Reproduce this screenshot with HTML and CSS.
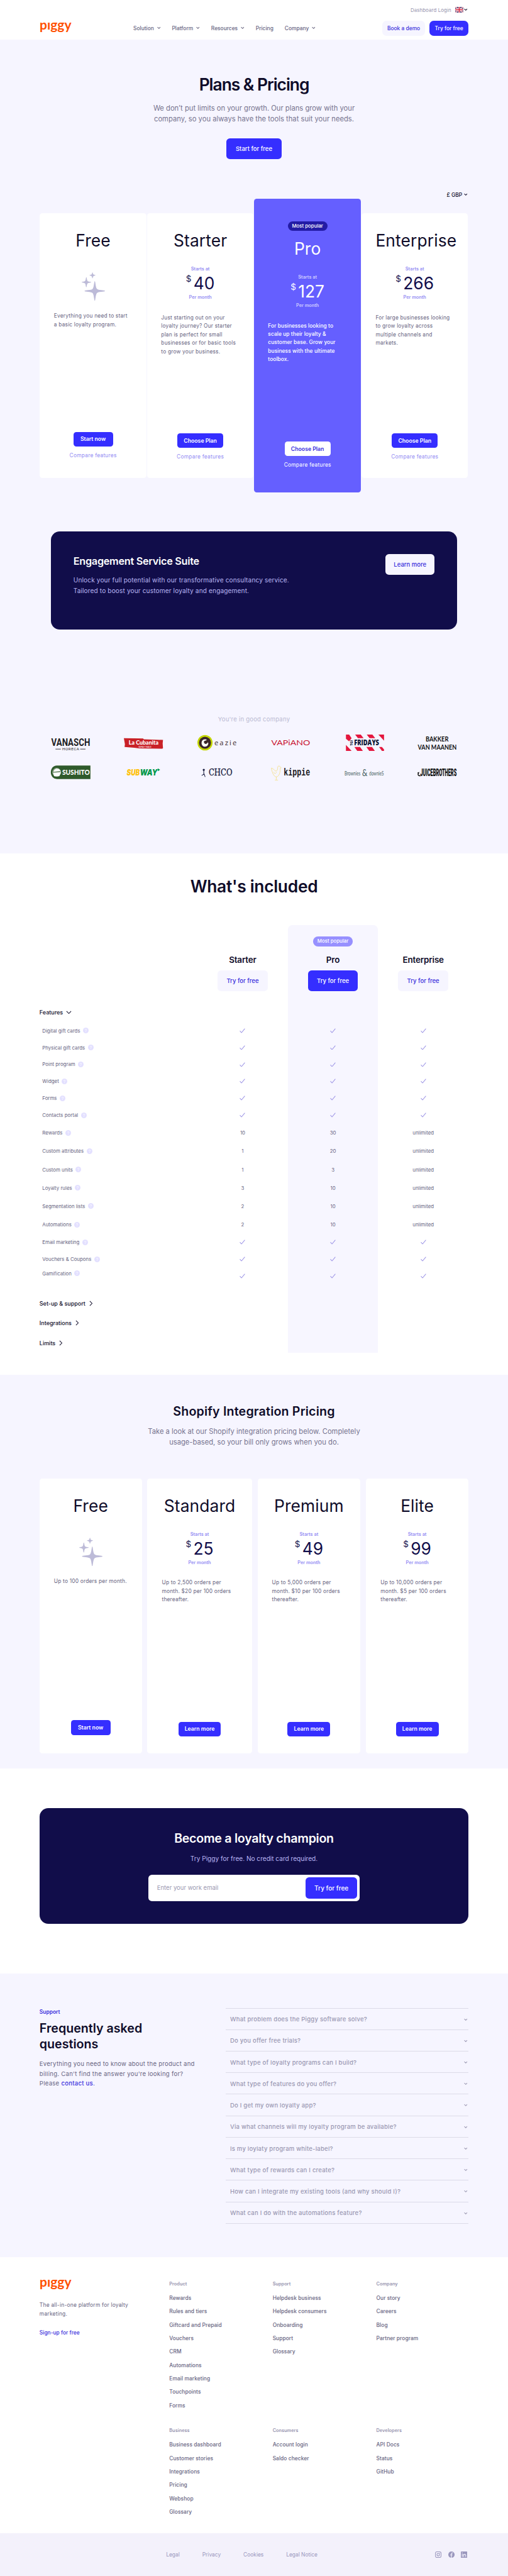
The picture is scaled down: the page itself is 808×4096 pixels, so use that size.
FILE: index.html
```html
<!DOCTYPE html>
<html lang="en">
<head>
    <meta charset="UTF-8">
    <meta name="viewport" content="width=device-width, initial-scale=1.0">
    <title>Piggy - Plans &amp; Pricing</title>
    <link rel="stylesheet" href="styles.css">
</head>
<body>
<div class="page">

    <!-- Shared icons -->
    <svg class="sprite">
        <symbol id="chev" viewBox="0 0 10 8"><path d="M1 2l4 4 4-4" fill="none" stroke="currentColor" stroke-width="1.8"/></symbol>
        <symbol id="chev-big" viewBox="0 0 16 10"><path d="M1.500 1.500L8 8l6.500-6.500" fill="none" stroke="currentColor" stroke-width="1.800"/></symbol>
        <symbol id="chev-right" viewBox="0 0 10 16"><path d="M1.500 1.500L8 8l-6.500 6.500" fill="none" stroke="currentColor" stroke-width="1.800"/></symbol>
        <symbol id="check" viewBox="0 0 16 14"><path d="M1 7.500l4.500 5L15 1" fill="none" stroke="currentColor" stroke-width="1.800"/></symbol>
        <symbol id="help" viewBox="0 0 16 16"><circle cx="8" cy="8" r="8" fill="#e3e0ff"/><path d="M5.800 6.400c0-3 4.600-2.800 4.400 0-.1 1.300-2.200 1.400-2.200 3.100M8 11v1.600" fill="none" stroke="#fff" stroke-width="1.500"/></symbol>
        <symbol id="stars" viewBox="0 0 66 81"><path d="M37 25c2 0 2 17 6 22s23 3 23 6-19 1-23 6-4 22-6 22-2-17-6-22-23-3-23-6 19-1 23-6 4-22 6-22zM13 14c1.500 0 1.500 8 3.500 10.500S27 26.500 27 28s-8 1-10.500 3.500S14.500 42 13 42s-1.500-8-3.500-10.500S0 29.500 0 28s7-1 9.500-3.500S11.500 14 13 14zM30.500 0c1 0 1 4.500 2.500 6s6 1.500 6 2.500-4.500 1-6 2.500-1.500 6-2.500 6-1-4.500-2.500-6-6-1.500-6-2.500 4.500-1 6-2.500 1.500-6 2.500-6z" fill="#bdbbd8"/></symbol>
    </svg>

    <header class="header">
        <div class="topbar">
            <a class="login">Dashboard Login</a>
            <svg class="flag" viewBox="0 0 23 16"><rect width="23" height="16" fill="#2b2b6b"/><path d="M0 0l23 16M23 0L0 16" stroke="#fff" stroke-width="3.500"/><path d="M0 0l23 16M23 0L0 16" stroke="#d8243c" stroke-width="1.200"/><path d="M11.500 0v16M0 8h23" stroke="#fff" stroke-width="5"/><path d="M11.500 0v16M0 8h23" stroke="#d8243c" stroke-width="3"/></svg>
            <svg class="chev dark"><use href="#chev"/></svg>
        </div>
        <div class="navbar">
            <svg class="brand" viewBox="0 0 92 30"><text x="0" y="20" textLength="90" lengthAdjust="spacingAndGlyphs">pıggy</text></svg>
            <nav class="nav">
                <a>Solution <svg class="chev"><use href="#chev"/></svg></a>
                <a>Platform <svg class="chev"><use href="#chev"/></svg></a>
                <a>Resources <svg class="chev"><use href="#chev"/></svg></a>
                <a>Pricing</a>
                <a>Company <svg class="chev"><use href="#chev"/></svg></a>
            </nav>
            <div class="nav-buttons">
                <a class="btn btn-soft btn-nav btn-demo">Book a demo</a>
                <a class="btn btn-blue btn-nav btn-try">Try for free</a>
            </div>
        </div>
    </header>

    <section class="pricing">
        <h1>Plans &amp; Pricing</h1>
        <p class="lead">We don’t put limits on your growth. Our plans grow with your<br>company, so you always have the tools that suit your needs.</p>
        <a class="btn btn-blue btn-start">Start for free</a>
        <div class="currency">£ GBP <svg class="chev dark"><use href="#chev"/></svg></div>

        <div class="plans">
            <div class="plan plan-free">
                <h3>Free</h3>
                <svg class="stars"><use href="#stars"/></svg>
                <p>Everything you need to start<br>a basic loyalty program.</p>
                <a class="btn btn-blue btn-plan btn-now">Start now</a>
                <a class="compare">Compare features</a>
            </div>
            <div class="plan">
                <h3>Starter</h3>
                <span class="small">Starts at</span>
                <div class="price"><sup>$</sup>40</div>
                <span class="small">Per month</span>
                <p>Just starting out on your<br>loyalty journey? Our starter<br>plan is perfect for small<br>businesses or for basic tools<br>to grow your business.</p>
                <a class="btn btn-blue btn-plan">Choose Plan</a>
                <a class="compare">Compare features</a>
            </div>
            <div class="plan plan-pro">
                <span class="pill">Most popular</span>
                <h3>Pro</h3>
                <span class="small">Starts at</span>
                <div class="price"><sup>$</sup>127</div>
                <span class="small">Per month</span>
                <p>For businesses looking to<br>scale up their loyalty &amp;<br>customer base. Grow your<br>business with the ultimate<br>toolbox.</p>
                <a class="btn btn-white btn-plan">Choose Plan</a>
                <a class="compare">Compare features</a>
            </div>
            <div class="plan">
                <h3>Enterprise</h3>
                <span class="small">Starts at</span>
                <div class="price"><sup>$</sup>266</div>
                <span class="small">Per month</span>
                <p>For large businesses looking<br>to grow loyalty across<br>multiple channels and<br>markets.</p>
                <a class="btn btn-blue btn-plan">Choose Plan</a>
                <a class="compare">Compare features</a>
            </div>
        </div>

        <div class="suite">
            <div>
                <h2>Engagement Service Suite</h2>
                <p>Unlock your full potential with our transformative consultancy service.<br>Tailored to boost your customer loyalty and engagement.</p>
            </div>
            <a class="btn btn-light">Learn more</a>
        </div>

        <p class="company">You're in good company</p>
        <div class="logos">
            <svg viewBox="0 0 112 50"><g fill="#1d1d22" font-family="Roboto"><text x="1" y="33" font-size="28" font-weight="700" textLength="110" lengthAdjust="spacingAndGlyphs">VANASCH</text><text x="32" y="47" font-size="11" textLength="48" lengthAdjust="spacing">HORECA</text></g><path d="M13 43h15M83 43h15" stroke="#1d1d22" stroke-width="1.500"/></svg>
            <svg viewBox="0 0 112 50"><path d="M0 12l55 1 1 2 55 2-1 10 1 13-2 2-65-1-14-2-28-2 1-8z" fill="#c92127"/><g fill="#fff" font-family="Lato"><text x="14" y="31" font-size="17" font-weight="900" textLength="84" lengthAdjust="spacingAndGlyphs">La Cubanita</text><text x="41" y="39" font-size="6" textLength="37" lengthAdjust="spacingAndGlyphs">TAPAS Y BAILE</text></g></svg>
            <svg viewBox="0 0 112 50"><ellipse cx="21.500" cy="25" rx="21.500" ry="22" fill="#c3d600"/><circle cx="21.500" cy="25" r="17" fill="#3a2629"/><path d="M31 28c-2 7-9 10-14 7-7-4-7-15 0-19 4-2 9-1 10 2-5-1-9 5-4 8 3 2 6 0 7-3" fill="#fff"/><path d="M21 20c-3 5 2 9 6 5" fill="none" stroke="#3a2629" stroke-width="3"/><text x="48" y="32" font-family="Open Sans" font-size="20" fill="#3a2629" textLength="63" lengthAdjust="spacing">eazie</text></svg>
            <svg viewBox="0 0 112 50"><text x="1" y="32" fill="#c8102e" font-family="Lato" font-size="22" textLength="110" lengthAdjust="spacingAndGlyphs">VAPiANO</text></svg>
            <svg viewBox="0 0 112 50"><path d="M4 2h9l7 10-7 9-9-7zM30 2h16l8 10H38zM63 2h16l8 10H71zM96 2h16v17zM4 48h16L4 31zM28 37h16l8 11H36zM62 37h16l8 11H70zM98 37h8l6 7v4h-6z" fill="#e4173e"/><g font-family="Open Sans" fill="#0b1533" font-weight="800"><text x="27" y="32" font-size="21" textLength="71" lengthAdjust="spacingAndGlyphs">FRIDAYS</text><text transform="translate(24 33) rotate(-90)" font-size="9">TGI</text></g></svg>
            <svg viewBox="0 0 112 50"><g font-family="Lato" font-size="21" font-weight="700" fill="#111"><text x="23" y="22" textLength="65" lengthAdjust="spacingAndGlyphs">BAKKER</text><text x="1" y="45" textLength="110" lengthAdjust="spacingAndGlyphs">VAN MAANEN</text></g></svg>
            <svg viewBox="0 0 112 50"><path d="M112 6v38H17C-6 44-6 6 17 6z" fill="#2f5a2b"/><circle cx="16.500" cy="25" r="11.500" fill="none" stroke="#fff" stroke-width="1.200"/><path d="M7 24c1-11 17-13 20-2zM6 26l22-2-4 12H9z" fill="#fff"/><text x="32" y="32" font-family="Lato" font-size="20" font-weight="900" fill="#fff" textLength="78" lengthAdjust="spacingAndGlyphs">SUSHITO</text></svg>
            <svg viewBox="0 0 112 50"><g font-family="Inter" font-size="24" font-weight="900" font-style="italic"><text x="8" y="34" fill="#ffc20e" textLength="37" lengthAdjust="spacingAndGlyphs">SUB</text><text x="46" y="34" fill="#00984a" textLength="49" lengthAdjust="spacingAndGlyphs">WAY</text></g><path d="M96 14l7 4-7 4z" fill="#00984a"/></svg>
            <svg viewBox="0 0 112 50"><circle cx="18" cy="18" r="3" fill="#15193c"/><path d="M18 18v14M12 34l7-4 3 8" fill="none" stroke="#15193c" stroke-width="1.800"/><text x="32" y="34" font-family="DejaVu Serif" font-size="25" fill="#15193c" stroke="#15193c" stroke-width=".6" textLength="67" lengthAdjust="spacingAndGlyphs">CHCO</text></svg>
            <svg viewBox="0 0 112 50"><path d="M1 13c4 0 9 6 11 8 5 1 7-2 7-10 0-5 6-5 6-2l4 3-3 2c1 8-2 22-10 24-7 0-12-9-15-25zM15 38v8M11 47h9M8 24c0 5 6 6 8 0" fill="none" stroke="#f4df86" stroke-width="1.500"/><text x="36" y="34" font-family="Liberation Mono" font-size="30" font-weight="700" fill="#17171a" textLength="75" lengthAdjust="spacingAndGlyphs">kippie</text></svg>
            <svg viewBox="0 0 112 50"><g font-family="Lato" fill="#3f5a5c"><text x="0" y="34" font-size="17" textLength="45" lengthAdjust="spacingAndGlyphs">Brownies</text><text x="50" y="35" font-size="26" textLength="15" lengthAdjust="spacingAndGlyphs">&amp;</text><text x="70" y="34" font-size="17" textLength="41" lengthAdjust="spacingAndGlyphs">downieS</text></g></svg>
            <svg viewBox="0 0 112 50"><path d="M0 26l5-2-1 5c-3 3 1 5 4 4l1 3c-6 1-10-3-8-7z" fill="#111"/><text x="8" y="35" font-family="Roboto" font-size="30" font-weight="900" fill="#111" textLength="103" lengthAdjust="spacingAndGlyphs">JUICEBROTHERS</text></svg>
        </div>
    </section>

    <section class="included">
        <h2>What's included</h2>
        <div class="row row-head">
            <div></div>
            <div class="cell"><h4>Starter</h4><a class="btn btn-soft btn-table">Try for free</a></div>
            <div class="cell"><span class="pill">Most popular</span><h4>Pro</h4><a class="btn btn-blue btn-table">Try for free</a></div>
            <div class="cell"><h4>Enterprise</h4><a class="btn btn-soft btn-table">Try for free</a></div>
        </div>
        <div class="row row-group"><div>Features <svg class="chev-big"><use href="#chev-big"/></svg></div><div></div><div></div><div></div></div>
        <div class="row"><div>Digital gift cards <svg class="help"><use href="#help"/></svg></div><div><svg class="check"><use href="#check"/></svg></div><div><svg class="check"><use href="#check"/></svg></div><div><svg class="check"><use href="#check"/></svg></div></div>
        <div class="row"><div>Physical gift cards <svg class="help"><use href="#help"/></svg></div><div><svg class="check"><use href="#check"/></svg></div><div><svg class="check"><use href="#check"/></svg></div><div><svg class="check"><use href="#check"/></svg></div></div>
        <div class="row"><div>Point program <svg class="help"><use href="#help"/></svg></div><div><svg class="check"><use href="#check"/></svg></div><div><svg class="check"><use href="#check"/></svg></div><div><svg class="check"><use href="#check"/></svg></div></div>
        <div class="row"><div>Widget <svg class="help"><use href="#help"/></svg></div><div><svg class="check"><use href="#check"/></svg></div><div><svg class="check"><use href="#check"/></svg></div><div><svg class="check"><use href="#check"/></svg></div></div>
        <div class="row"><div>Forms <svg class="help"><use href="#help"/></svg></div><div><svg class="check"><use href="#check"/></svg></div><div><svg class="check"><use href="#check"/></svg></div><div><svg class="check"><use href="#check"/></svg></div></div>
        <div class="row"><div>Contacts portal <svg class="help"><use href="#help"/></svg></div><div><svg class="check"><use href="#check"/></svg></div><div><svg class="check"><use href="#check"/></svg></div><div><svg class="check"><use href="#check"/></svg></div></div>
        <div class="row row-value"><div>Rewards <svg class="help"><use href="#help"/></svg></div><div>10</div><div>30</div><div>unlimited</div></div>
        <div class="row row-value"><div>Custom attributes <svg class="help"><use href="#help"/></svg></div><div>1</div><div>20</div><div>unlimited</div></div>
        <div class="row row-value"><div>Custom units <svg class="help"><use href="#help"/></svg></div><div>1</div><div>3</div><div>unlimited</div></div>
        <div class="row row-value"><div>Loyalty rules <svg class="help"><use href="#help"/></svg></div><div>3</div><div>10</div><div>unlimited</div></div>
        <div class="row row-value"><div>Segmentation lists <svg class="help"><use href="#help"/></svg></div><div>2</div><div>10</div><div>unlimited</div></div>
        <div class="row row-value"><div>Automations <svg class="help"><use href="#help"/></svg></div><div>2</div><div>10</div><div>unlimited</div></div>
        <div class="row"><div>Email marketing <svg class="help"><use href="#help"/></svg></div><div><svg class="check"><use href="#check"/></svg></div><div><svg class="check"><use href="#check"/></svg></div><div><svg class="check"><use href="#check"/></svg></div></div>
        <div class="row"><div>Vouchers &amp; Coupons <svg class="help"><use href="#help"/></svg></div><div><svg class="check"><use href="#check"/></svg></div><div><svg class="check"><use href="#check"/></svg></div><div><svg class="check"><use href="#check"/></svg></div></div>
        <div class="row row-last"><div>Gamification <svg class="help"><use href="#help"/></svg></div><div><svg class="check"><use href="#check"/></svg></div><div><svg class="check"><use href="#check"/></svg></div><div><svg class="check"><use href="#check"/></svg></div></div>
        <div class="row row-gap"><div></div><div></div><div></div><div></div></div>
        <div class="row row-group"><div>Set-up &amp; support <svg class="chev-right"><use href="#chev-right"/></svg></div><div></div><div></div><div></div></div>
        <div class="row row-group"><div>Integrations <svg class="chev-right"><use href="#chev-right"/></svg></div><div></div><div></div><div></div></div>
        <div class="row row-group"><div>Limits <svg class="chev-right"><use href="#chev-right"/></svg></div><div></div><div></div><div></div></div>
    </section>

    <section class="shopify">
        <h2>Shopify Integration Pricing</h2>
        <p class="lead">Take a look at our Shopify integration pricing below. Completely<br>usage-based, so your bill only grows when you do.</p>
        <div class="plans">
            <div class="plan plan-free">
                <h3>Free</h3>
                <svg class="stars"><use href="#stars"/></svg>
                <p>Up to 100 orders per month.</p>
                <a class="btn btn-blue btn-plan btn-now">Start now</a>
            </div>
            <div class="plan">
                <h3>Standard</h3>
                <span class="small">Starts at</span>
                <div class="price"><sup>$</sup>25</div>
                <span class="small">Per month</span>
                <p>Up to 2,500 orders per<br>month. $20 per 100 orders<br>thereafter.</p>
                <a class="btn btn-blue btn-plan btn-more">Learn more</a>
            </div>
            <div class="plan">
                <h3>Premium</h3>
                <span class="small">Starts at</span>
                <div class="price"><sup>$</sup>49</div>
                <span class="small">Per month</span>
                <p>Up to 5,000 orders per<br>month. $10 per 100 orders<br>thereafter.</p>
                <a class="btn btn-blue btn-plan btn-more">Learn more</a>
            </div>
            <div class="plan">
                <h3>Elite</h3>
                <span class="small">Starts at</span>
                <div class="price"><sup>$</sup>99</div>
                <span class="small">Per month</span>
                <p>Up to 10,000 orders per<br>month. $5 per 100 orders<br>thereafter.</p>
                <a class="btn btn-blue btn-plan btn-more">Learn more</a>
            </div>
        </div>
    </section>

    <section class="cta">
        <div class="cta-box">
            <h2>Become a loyalty champion</h2>
            <p>Try Piggy for free. No credit card required.</p>
            <div class="cta-form">
                <span>Enter your work email</span>
                <a class="btn btn-blue">Try for free</a>
            </div>
        </div>
    </section>

    <section class="faq">
        <div class="faq-intro">
            <span class="tag">Support</span>
            <h2>Frequently asked<br>questions</h2>
            <p>Everything you need to know about the product and<br>billing. Can't find the answer you're looking for?<br>Please <a>contact us.</a></p>
        </div>
        <div class="faq-list">
            <div>What problem does the Piggy software solve? <svg class="chev"><use href="#chev"/></svg></div>
            <div>Do you offer free trials? <svg class="chev"><use href="#chev"/></svg></div>
            <div>What type of loyalty programs can I build? <svg class="chev"><use href="#chev"/></svg></div>
            <div>What type of features do you offer? <svg class="chev"><use href="#chev"/></svg></div>
            <div>Do I get my own loyalty app? <svg class="chev"><use href="#chev"/></svg></div>
            <div>Via what channels will my loyalty program be available? <svg class="chev"><use href="#chev"/></svg></div>
            <div>Is my loylaty program white-label? <svg class="chev"><use href="#chev"/></svg></div>
            <div>What type of rewards can I create? <svg class="chev"><use href="#chev"/></svg></div>
            <div>How can I integrate my existing tools (and why should I)? <svg class="chev"><use href="#chev"/></svg></div>
            <div>What can I do with the automations feature? <svg class="chev"><use href="#chev"/></svg></div>
        </div>
    </section>

    <footer>
        <div class="footer">
            <div class="footer-intro">
                <svg class="brand" viewBox="0 0 92 30"><text x="0" y="20" textLength="90" lengthAdjust="spacingAndGlyphs">pıggy</text></svg>
                <p>The all-in-one platform for loyalty<br>marketing.</p>
                <a>Sign-up for free</a>
            </div>
            <div class="footer-links">
                <ul>
                    <li class="title">Product</li>
                    <li>Rewards</li>
                    <li>Rules and tiers</li>
                    <li>Giftcard and Prepaid</li>
                    <li>Vouchers</li>
                    <li>CRM</li>
                    <li>Automations</li>
                    <li>Email marketing</li>
                    <li>Touchpoints</li>
                    <li>Forms</li>
                </ul>
                <ul>
                    <li class="title">Support</li>
                    <li>Helpdesk business</li>
                    <li>Helpdesk consumers</li>
                    <li>Onboarding</li>
                    <li>Support</li>
                    <li>Glossary</li>
                </ul>
                <ul>
                    <li class="title">Company</li>
                    <li>Our story</li>
                    <li>Careers</li>
                    <li>Blog</li>
                    <li>Partner program</li>
                </ul>
                <ul>
                    <li class="title">Business</li>
                    <li>Business dashboard</li>
                    <li>Customer stories</li>
                    <li>Integrations</li>
                    <li>Pricing</li>
                    <li>Webshop</li>
                    <li>Glossary</li>
                </ul>
                <ul>
                    <li class="title">Consumers</li>
                    <li>Account login</li>
                    <li>Saldo checker</li>
                </ul>
                <ul>
                    <li class="title">Developers</li>
                    <li>API Docs</li>
                    <li>Status</li>
                    <li>GitHub</li>
                </ul>
            </div>
        </div>
        <div class="legal">
            <div class="legal-links"><a>Legal</a><a>Privacy</a><a>Cookies</a><a>Legal Notice</a></div>
            <div class="social">
                <svg viewBox="0 0 18 18"><rect x="1" y="1" width="16" height="16" rx="4" fill="none" stroke="#9a97bd" stroke-width="1.800"/><circle cx="9" cy="9" r="3.700" fill="none" stroke="#9a97bd" stroke-width="1.800"/><circle cx="13.500" cy="4.500" r="1.100" fill="#9a97bd"/></svg>
                <svg viewBox="0 0 18 18"><circle cx="9" cy="9" r="9" fill="#9a97bd"/><path d="M8.800 18V7c0-2 1.200-3 4-2.600M5.500 9.800h6.500" fill="none" stroke="#f3f1fb" stroke-width="2.200"/></svg>
                <svg viewBox="0 0 18 18"><rect width="18" height="18" rx="1.500" fill="#9a97bd"/><path d="M4 7v8M4 3v2.500M8 15V7M8 15v-4c0-4 5.800-4 5.800 0v4" fill="none" stroke="#f3f1fb" stroke-width="2.200"/></svg>
            </div>
        </div>
    </footer>

</div>
</body>
</html>
```
FILE: styles.css
```css
* {
    box-sizing: border-box;
    margin: 0;
    padding: 0;
}

body {
    font-family: Inter, "Open Sans", sans-serif;
    background: #f3f1fb;
}

.page {
    zoom: 0.561;
    font-size: 15px;
    color: #67647f;
    background: #fff;
    white-space: nowrap;
    overflow: hidden;
}

h1, h2, h3, h4 {
    color: #0f0c29;
    font-weight: 600;
}

svg {
    flex-shrink: 0;
}

ul {
    list-style: none;
}

.sprite {
    display: none;
}

.chev {
    width: 10px;
    height: 8px;
}

.dark {
    color: #0f0c29;
}

/* Buttons */
.btn {
    display: flex;
    align-items: center;
    justify-content: center;
    border-radius: 10px;
    font-weight: 500;
}

.btn-blue {
    background: #352eff;
    color: #fff;
}

.btn-soft {
    background: #f6f5ff;
    color: #3a2fdc;
}

.btn-white {
    background: #fff;
    color: #3a2fdc;
}

.btn-light {
    background: #f6f5ff;
    color: #3a2fdc;
    width: 139px;
    height: 58px;
    font-size: 17px;
}

.btn-nav {
    height: 42px;
    border-radius: 12px;
    font-size: 15px;
}

.btn-demo {
    width: 121px;
}

.btn-try {
    width: 110px;
}

.btn-start {
    width: 158px;
    height: 58px;
    margin: 40px auto 0;
    font-size: 17px;
}

.btn-plan {
    width: 130px;
    height: 42px;
    border-radius: 8px;
    font-size: 15.5px;
    font-weight: 600;
    margin: auto auto 0;
}

.btn-now {
    width: 112px;
}

.btn-more {
    width: 121px;
}

.btn-table {
    width: 142px;
    height: 58px;
    font-size: 17px;
    margin-top: 16px;
}

.pill {
    display: block;
    width: 112px;
    height: 28px;
    border-radius: 14px;
    line-height: 28px;
    font-size: 14px;
    font-weight: 500;
    text-align: center;
    color: #fff;
    background: #231ba5;
}

/* Header */
.header {
    height: 112px;
    padding: 0 112px;
}

.topbar {
    display: flex;
    justify-content: flex-end;
    align-items: center;
    height: 56px;
    padding-right: 2px;
    font-size: 14px;
    letter-spacing: 0.2px;
    color: #9693ae;
}

.flag {
    width: 23px;
    height: 16px;
    margin: 0 2px 0 12px;
}

.navbar {
    display: flex;
    align-items: center;
    height: 48px;
}

.brand {
    display: block;
    width: 92px;
    height: 30px;
    font-family: Lato, sans-serif;
    font-size: 37px;
    font-weight: 700;
    fill: #ff5000;
    overflow: visible;
}

.nav {
    display: flex;
    width: 706px;
    margin-left: 174px;
    font-size: 15px;
    font-weight: 500;
    gap: 32px;
}

.nav .chev {
    margin-left: 5px;
    vertical-align: 2px;
}

.nav-buttons {
    display: flex;
    gap: 13px;
}

/* Plans & pricing */
.pricing {
    height: 2307px;
    padding: 98px 112px 0;
    background: #f6f5ff;
}

.pricing h1 {
    font-size: 47px;
    line-height: 58px;
    letter-spacing: -1.8px;
    text-align: center;
}

.lead {
    font-size: 20px;
    line-height: 30px;
    text-align: center;
    color: #77748f;
    margin-top: 25px;
}

.currency {
    display: flex;
    align-items: center;
    justify-content: flex-end;
    gap: 6px;
    height: 22px;
    margin-top: 90px;
    padding-right: 2px;
    font-weight: 500;
    color: #0f0c29;
}

.plans {
    display: grid;
    grid-template-columns: repeat(4, 304px);
    height: 832px;
}

.plan {
    display: flex;
    flex-direction: column;
    align-items: center;
    margin: 41px 1px;
    padding: 49px 40px;
    background: #fff;
    border-radius: 8px;
}

.plan h3 {
    width: 100%;
    font-size: 47px;
    font-weight: 400;
    line-height: 60px;
    letter-spacing: 0.2px;
    text-align: center;
    margin-bottom: 41px;
}

.plan .small {
    font-size: 13px;
    line-height: 18px;
    font-weight: 600;
    color: #948df3;
}

.price {
    display: flex;
    gap: 6px;
    margin: 7px 0;
    font-size: 47px;
    line-height: 48px;
    color: #110d4a;
}

.price sup {
    font-size: 24px;
    line-height: 22px;
}

.plan p {
    align-self: stretch;
    margin-top: 37px;
    font-size: 15px;
    line-height: 24px;
    letter-spacing: 0.3px;
}

.compare {
    margin-top: 15px;
    line-height: 20px;
    letter-spacing: 0.4px;
    color: #948df3;
}

.plan-free {
    padding-bottom: 53px;
}

.stars {
    width: 66px;
    height: 81px;
    margin-top: 18px;
}

.plan-free p {
    margin-top: 32px;
}

.plan-pro {
    margin: 0;
    padding: 64px 40px 67px;
    background: #655fff;
    color: #fff;
}

.plan-pro h3 {
    margin-top: 21px;
}

.plan-pro h3, .plan-pro .price, .plan-pro .compare {
    color: #fff;
}

.plan-pro .small {
    color: #cfccff;
}

.plan-pro p {
    font-weight: 500;
    letter-spacing: 0.1px;
}

/* Service suite banner */
.suite {
    display: flex;
    justify-content: space-between;
    width: 1152px;
    height: 278px;
    margin: 112px auto 0;
    padding: 64px;
    background: #110d4a;
    border-radius: 25px;
}

.suite h2 {
    color: #fff;
    font-size: 29px;
    line-height: 36px;
    letter-spacing: -0.5px;
    margin-top: 2px;
}

.suite p {
    margin-top: 20px;
    font-size: 18px;
    line-height: 30px;
    letter-spacing: 0.25px;
    color: #bab6f5;
}

.company {
    margin-top: 241px;
    font-size: 17px;
    line-height: 24px;
    letter-spacing: 0.4px;
    text-align: center;
    color: #babad2;
}

.logos {
    display: grid;
    grid-template-columns: repeat(6, 112px);
    justify-content: space-between;
    gap: 35px 0;
    margin-top: 30px;
    padding: 0 32px;
}

.logos svg {
    width: 112px;
    height: 50px;
    overflow: visible;
}

/* Feature table */
.included {
    height: 1478px;
    padding: 64px 112px 0;
}

.included h2 {
    font-size: 47px;
    line-height: 60px;
    letter-spacing: -0.5px;
    text-align: center;
    margin-bottom: 80px;
}

.row {
    display: grid;
    grid-template-columns: 448px 256px 256px 256px;
    height: 48px;
    font-size: 14px;
}

.row > div {
    display: flex;
    align-items: center;
    justify-content: center;
}

.row > div:first-child {
    justify-content: flex-start;
    padding-left: 8px;
    gap: 8px;
}

.row > div:nth-child(3) {
    background: #f7f6ff;
}

.row-head {
    height: 218px;
}

.row > .cell {
    flex-direction: column;
    justify-content: flex-end;
    padding-bottom: 32px;
    border-radius: 12px 12px 0 0;
}

.cell h4 {
    font-size: 24px;
    line-height: 30px;
    letter-spacing: -0.3px;
}

.cell .pill {
    background: #9790ff;
    margin-bottom: 22px;
}

.row-value {
    height: 52px;
}

.row-last > div:first-child {
    padding-bottom: 15px;
}

.row-gap {
    height: 25px;
}

.row-group {
    height: 56px;
    font-size: 16px;
    font-weight: 500;
    color: #0f0c29;
}

.row-group > div:first-child {
    padding-left: 0;
}

.chev-big {
    width: 16px;
    height: 10px;
}

.chev-right {
    width: 10px;
    height: 16px;
    margin-left: 3px;
}

.help {
    width: 16px;
    height: 16px;
}

.check {
    width: 16px;
    height: 14px;
    color: #9d95e6;
}

/* Shopify */
.shopify {
    height: 1115px;
    padding: 81px 112px 0;
    background: #f6f5ff;
}

.shopify h2 {
    font-size: 35px;
    line-height: 44px;
    letter-spacing: 0.3px;
    text-align: center;
}

.shopify .lead {
    margin-top: 21px;
}

.shopify .plans {
    grid-template-columns: 290px 296px 292px 290px;
    gap: 16px;
    height: 780px;
    margin-top: 87px;
}

.shopify .plan {
    margin: 0;
    padding: 49px 41px 48px;
}

.shopify .plan-free {
    padding-bottom: 52px;
}

/* Call to action */
.cta {
    height: 582px;
    padding: 112px 112px 0;
}

.cta-box {
    height: 328px;
    padding-top: 65px;
    background: #110d4a;
    border-radius: 25px;
    text-align: center;
}

.cta h2 {
    color: #fff;
    font-size: 35px;
    line-height: 44px;
    letter-spacing: -0.5px;
}

.cta p {
    margin-top: 20px;
    font-size: 18px;
    line-height: 30px;
    color: #bab6f5;
}

.cta-form {
    display: flex;
    align-items: center;
    justify-content: space-between;
    width: 600px;
    height: 74px;
    margin: 31px auto 0;
    padding: 0 7px 0 25px;
    background: #fff;
    border-radius: 10px;
    font-size: 17px;
    color: #9b99b1;
}

.cta-form .btn {
    width: 147px;
    height: 60px;
    font-size: 18px;
}

/* FAQ */
.faq {
    display: flex;
    justify-content: space-between;
    height: 804px;
    padding: 97px 112px 0;
    background: #f6f5ff;
}

.faq-intro {
    padding-top: 3px;
}

.tag {
    display: block;
    font-size: 15px;
    font-weight: 600;
    line-height: 20px;
    color: #3a2fdc;
}

.faq h2 {
    margin-top: 14px;
    font-size: 35px;
    line-height: 44px;
}

.faq p {
    margin-top: 20px;
    font-size: 17px;
    line-height: 28px;
    letter-spacing: 0.5px;
}

.faq p a {
    color: #3a2fdc;
    font-weight: 500;
}

.faq-list {
    width: 688px;
    height: 611px;
    border-top: 1px solid #dcdbe8;
}

.faq-list div {
    display: flex;
    align-items: center;
    justify-content: space-between;
    height: 61px;
    padding: 2px 2px 0 12px;
    border-bottom: 1px solid #dcdbe8;
    font-size: 17px;
    font-weight: 500;
    letter-spacing: 0.4px;
    color: #9a98b2;
}

/* Footer */
.footer {
    display: flex;
    height: 782px;
    padding: 64px 112px 0;
}

.footer-intro {
    width: 368px;
}

.footer-intro p {
    margin: 28px 0 30px;
    line-height: 25px;
    letter-spacing: 0.4px;
}

.footer-intro a {
    color: #3a2fdc;
    font-weight: 500;
    line-height: 24px;
}

.footer-links {
    display: grid;
    grid-template-columns: 293px 294px 260px;
    align-content: start;
    row-gap: 40px;
}

.footer-links li {
    font-size: 15px;
    font-weight: 500;
    line-height: 38px;
    letter-spacing: 0.1px;
}

.footer-links .title {
    font-size: 13px;
    font-weight: 600;
    line-height: 20px;
    margin: 1px 0 13px;
    color: #9693ae;
}

.legal {
    display: flex;
    align-items: center;
    justify-content: space-between;
    height: 120px;
    padding: 0 116px 0 471px;
    background: #f3f1fb;
    color: #9a97bd;
}

.legal-links {
    display: flex;
    gap: 64px;
}

.social {
    display: flex;
    gap: 18px;
}

.social svg {
    width: 18px;
    height: 18px;
}
```
